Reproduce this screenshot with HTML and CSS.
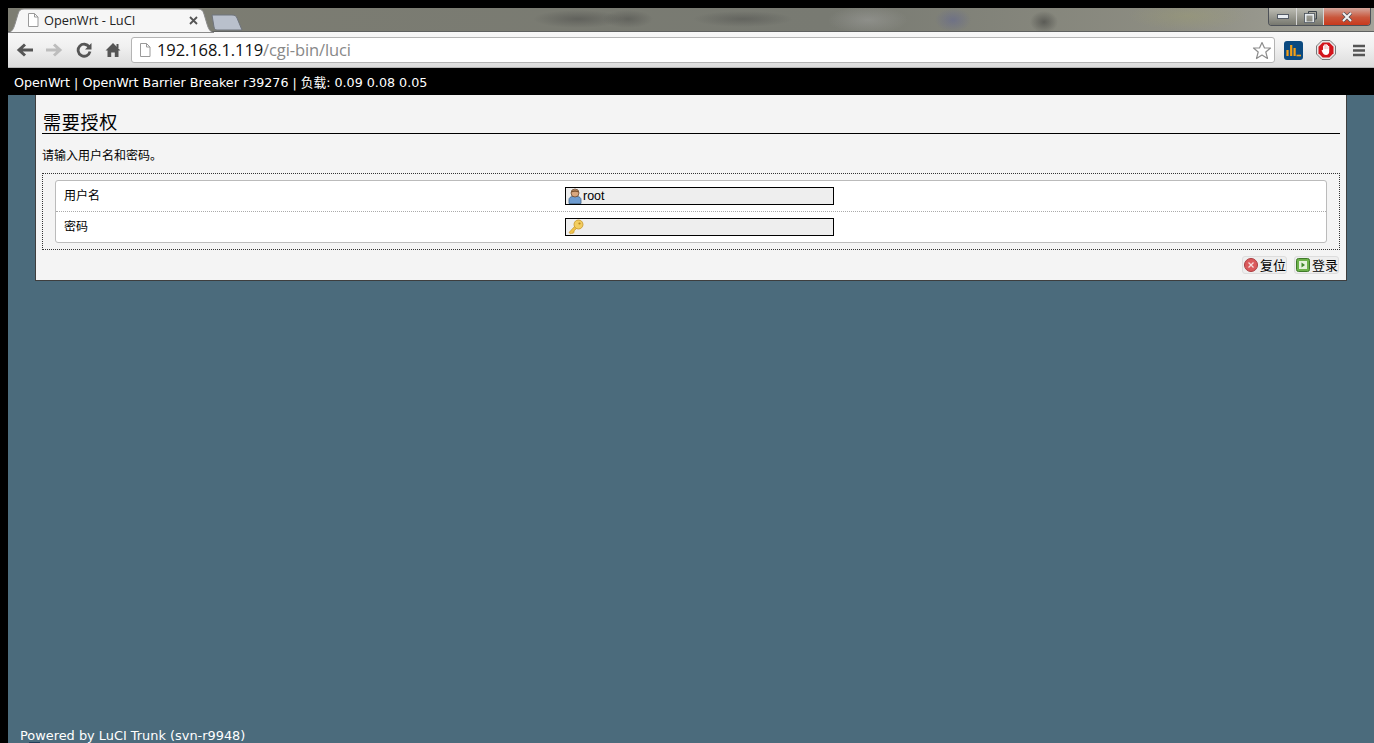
FILE: index.html
```html
<!DOCTYPE html>
<html lang="zh">
<head>
<meta charset="utf-8">
<title>OpenWrt - LuCI</title>
<link rel="stylesheet" href="styles.css">
</head>
<body>
<div class="browser">
  <div class="tabstrip">
    <div class="tab">
      <svg class="tab-shape" width="206" height="25" viewBox="0 0 206 25"><path d="M0 24.500C4 24 5.500 21 7 16L10 6C11 2.500 12.500 1 16 1H190C193.500 1 195 2.500 196 6L199 16C200.500 21 202 24 206 24.500Z" fill="#f6f6f6" stroke="#8b8b8b" stroke-width="1"/></svg>
      <svg class="page-ico" width="12" height="14" viewBox="0 0 12 14"><path d="M1.500.5H7.500L11 4V13.500H1.500Z" fill="#fff" stroke="#9a9a9a"/><path d="M7.500.5V4H11" fill="none" stroke="#9a9a9a"/></svg>
      <span class="tab-title">OpenWrt - LuCI</span>
      <svg class="tab-close" width="9" height="9" viewBox="0 0 9 9"><path d="M1 1L8 8M8 1L1 8" stroke="#555" stroke-width="1.800"/></svg>
    </div>
    <svg class="newtab" width="33" height="17" viewBox="0 0 33 17"><path d="M1 1H21C24 1 25 2 26 4L31 16H6C4 16 3.500 15 3 13Z" fill="#b9c0cc" stroke="#6f747c" stroke-width="1"/></svg>
    <div class="winctl">
      <div class="wbtn wmin"><svg width="12" height="5" viewBox="0 0 12 5"><rect x=".5" y=".5" width="11" height="4" fill="#e9eef2" stroke="#555c66"/></svg></div>
      <div class="wbtn wmax"><svg width="13" height="12" viewBox="0 0 13 12"><path d="M4.500 3V.5H12.500V8H9.500" fill="none" stroke="#3d444c" stroke-width="1"/><rect x="1.500" y="3.500" width="8" height="8" fill="none" stroke="#e6ebef" stroke-width="2"/><rect x=".5" y="2.500" width="10" height="9" fill="none" stroke="#4a525a" stroke-width=".8"/></svg></div>
      <div class="wbtn wclose"><svg width="12" height="10" viewBox="0 0 12 10"><path d="M2 1L10 9M10 1L2 9" stroke="#4c4f57" stroke-width="3.400"/><path d="M2 1L10 9M10 1L2 9" stroke="#f2f2f2" stroke-width="2"/></svg></div>
    </div>
  </div>
  <div class="toolbar">
    <svg class="nav nav-back" width="18" height="16" viewBox="0 0 18 16"><path d="M17 8H5M9 2.500L3 8L9 13.500" fill="none" stroke="#555" stroke-width="3"/></svg>
    <svg class="nav nav-fwd" width="18" height="16" viewBox="0 0 18 16"><path d="M1 8H13M9 2.500L15 8L9 13.500" fill="none" stroke="#bdbdbd" stroke-width="3"/></svg>
    <svg class="nav nav-reload" width="16" height="16" viewBox="0 0 16 16"><path d="M13.200 5A6 6 0 1 0 14 9.500" fill="none" stroke="#555" stroke-width="2.800"/><path d="M15.500 1V7.500H9Z" fill="#555"/></svg>
    <svg class="nav nav-home" width="16" height="16" viewBox="0 0 16 16"><path d="M8 1L15.500 8.500H13.500V15H9.800V10.500H6.200V15H2.500V8.500H.5Z" fill="#555"/><rect x="11.500" y="2" width="2" height="4" fill="#555"/></svg>
    <div class="omnibox">
      <svg width="12" height="14" viewBox="0 0 12 14"><path d="M1.500.5H7.500L11 4V13.500H1.500Z" fill="#fff" stroke="#9a9a9a"/><path d="M7.500.5V4H11" fill="none" stroke="#9a9a9a"/></svg>
      <span class="url"><span class="host">192.168.1.119</span>/cgi-bin/luci</span>
      <svg class="star" width="20" height="19" viewBox="0 0 20 19"><path d="M10 1.500L12.500 7H18.500L13.800 11L15.500 17.500L10 14L4.500 17.500L6.200 11L1.500 7H7.500Z" fill="#fff" stroke="#8d8d8d" stroke-width="1.200" stroke-linejoin="round"/></svg>
    </div>
    <svg class="ext ext-a" width="19" height="19" viewBox="0 0 19 19"><rect width="19" height="19" rx="3" fill="#0b4a80"/><path d="M3.500 9V15M7.200 4V15M10.600 7V15" stroke="#f5a016" stroke-width="2.200"/><path d="M12.500 14.500H17" stroke="#f5a016" stroke-width="1.600"/></svg>
    <svg class="ext ext-b" width="20" height="20" viewBox="0 0 20 20"><path d="M6 .5H14L19.500 6V14L14 19.500H6L.5 14V6Z" fill="#e9e9e9" stroke="#777"/><path d="M6.700 2.500H13.300L17.500 6.700V13.300L13.300 17.500H6.700L2.500 13.300V6.700Z" fill="#d3141b"/><path d="M5.500 10.500L7 9.800V6C7 5.300 8.200 5.300 8.200 6V4.800C8.200 4.100 9.500 4.100 9.500 4.800V4.500C9.500 3.800 10.800 3.800 10.800 4.500V5.200C10.800 4.500 12 4.500 12 5.200V6.500C12 5.900 13.200 5.900 13.200 6.500V11.500C13.200 13.800 12 15 10 15C8.500 15 7.500 14.200 6.800 13Z" fill="#fff"/><path d="M8.200 6V9M9.500 5V9M10.800 5.300V9M12 6.500V9" stroke="#e39a9a" stroke-width=".5"/></svg>
    <svg class="menu" width="14" height="13" viewBox="0 0 14 13"><path d="M1 2H13M1 6.500H13M1 11H13" stroke="#555" stroke-width="2.400"/></svg>
  </div>
  <div class="page">
    <header class="topbar">OpenWrt | OpenWrt Barrier Breaker r39276 | 负载: 0.09 0.08 0.05</header>
    <main class="panel">
      <h2 class="heading">需要授权</h2>
      <p class="descr">请输入用户名和密码。</p>
      <fieldset class="fields">
        <div class="fieldbox">
          <div class="row">
            <label class="lbl">用户名</label>
            <div class="inp">
              <svg width="14" height="16" viewBox="0 0 14 16"><path d="M1 15.500V11.500C1 9.800 2.500 9 4 8.500H10C11.500 9 13 9.800 13 11.500V15.500Z" fill="#6d9bd0" stroke="#3d6389" stroke-width=".8"/><circle cx="7" cy="5" r="4" fill="#d9a77f" stroke="#6a4a33" stroke-width=".8"/><path d="M3 4.500C3 1.500 11 1.500 11 4.500C8.500 3.500 5.500 3.500 3 4.500Z" fill="#7a5230"/></svg>
              <span class="val">root</span>
            </div>
          </div>
          <div class="row row-last">
            <label class="lbl">密码</label>
            <div class="inp">
              <svg width="16" height="16" viewBox="0 0 16 16"><path d="M7 7L1 13.500L2.800 15L4 13.800L5 14.500L6.200 13L5.800 12L9 9Z" fill="#f0c349" stroke="#c5942a" stroke-width=".7"/><circle cx="10.500" cy="5.500" r="4.500" fill="#f2cd60" stroke="#c5942a" stroke-width=".8"/><circle cx="11.500" cy="4.500" r="1.100" fill="#b8861f"/></svg>
            </div>
          </div>
        </div>
      </fieldset>
      <div class="actions">
        <button class="btn">
          <svg width="14" height="14" viewBox="0 0 14 14"><circle cx="7" cy="7" r="6.500" fill="#db5a5c" stroke="#a93c3f"/><path d="M4.500 4.500L9.500 9.500M9.500 4.500L4.500 9.500" stroke="#f6dcdc" stroke-width="1.300"/></svg>
          <span>复位</span>
        </button>
        <button class="btn">
          <svg width="14" height="14" viewBox="0 0 14 14"><rect x=".5" y=".5" width="13" height="13" rx="2" fill="#6db24a" stroke="#3f7a2a"/><rect x="3" y="3" width="8" height="8" fill="#e5f2dc"/><path d="M5.500 4.500L9 7L5.500 9.500Z" fill="#3f8a2a"/></svg>
          <span>登录</span>
        </button>
      </div>
    </main>
    <footer class="foot">Powered by LuCI Trunk (svn-r9948)</footer>
  </div>
</div>
</body>
</html>
```

FILE: styles.css
```css
* { box-sizing: border-box; }
html, body { margin: 0; height: 100%; overflow: hidden; }
body {
  background: #000;
  padding: 8px 0 0 8px;
  font-family: "Liberation Sans", "Noto Sans CJK SC", sans-serif;
}
.browser { height: 735px; display: flex; flex-direction: column; }

.tabstrip {
  height: 24px;
  flex: none;
  display: flex;
  align-items: flex-start;
  background:
    radial-gradient(ellipse 45px 9px at 570px 11px, rgba(60,60,60,.4), transparent),
    radial-gradient(ellipse 25px 9px at 620px 11px, rgba(55,55,55,.35), transparent),
    radial-gradient(ellipse 50px 8px at 735px 11px, rgba(60,60,60,.35), transparent),
    radial-gradient(ellipse 40px 14px at 860px 12px, rgba(170,170,170,.4), transparent),
    radial-gradient(ellipse 18px 12px at 945px 12px, rgba(90,95,150,.45), transparent),
    radial-gradient(ellipse 60px 14px at 1180px 8px, rgba(160,160,110,.35), transparent),
    radial-gradient(ellipse 14px 11px at 1036px 14px, rgba(40,40,40,.45), transparent),
    linear-gradient(90deg, #7d7d72, #787a72 60%, #8d8d82 85%, #a3a39a);
  border-bottom: 1px solid #5f6160;
}
.tab { position: relative; width: 206px; height: 25px; flex: none; margin-top: 0; }
.tab-shape { position: absolute; left: 0; top: 0; }
.page-ico { position: absolute; left: 19px; top: 5px; }
.tab-title {
  position: absolute; left: 36px; top: 4px;
  font: 12.800px/16px "Open Sans", "Liberation Sans", sans-serif;
  color: #222;
}
.tab-close { position: absolute; left: 181px; top: 8px; }
.newtab { flex: none; margin: 6px 0 0 -3px; }

.winctl {
  margin-left: auto;
  margin-right: 3px;
  display: flex;
  height: 18px;
  width: 103px;
  border: 1px solid #4d5158;
  border-top: 0;
  border-radius: 0 0 4px 4px;
  overflow: hidden;
}
.wbtn { display: flex; align-items: center; justify-content: center; height: 100%; border-right: 1px solid #d6d6d6; }
.wmin { width: 28px; background: linear-gradient(#bdbdb4, #77786f); }
.wmax { width: 27px; background: linear-gradient(#bdbdb4, #77786f); }
.wclose { flex: 1; border-right: 0; background: linear-gradient(#d5a79c 0, #c9573c 55%, #c9391d); }

.toolbar {
  height: 36px;
  flex: none;
  display: flex;
  align-items: center;
  padding: 1px 8px 0 8px;
  background: linear-gradient(#f8f8f8, #f1f1f1 40%, #dcdcdc);
  border-bottom: 1px solid #b5b5b5;
}
.nav { flex: none; }
.nav-back { margin-right: 11px; }
.nav-fwd { margin-right: 13px; }
.nav-reload { margin-right: 13px; }
.nav-home { margin-right: 10px; }
.omnibox {
  width: 1144px;
  height: 26px;
  flex: none;
  display: flex;
  align-items: center;
  gap: 6px;
  padding: 0 2px 0 7px;
  background: #fff;
  border: 1px solid #b4b4b4;
  border-radius: 3px;
}
.url { font: 16.500px/20px "Open Sans", "Liberation Sans", sans-serif; color: #888; letter-spacing: -.1px; }
.host { color: #111; }
.star { margin-left: auto; }
.ext { flex: none; }
.ext-a { margin-left: 9px; }
.ext-b { margin-left: 13px; }
.menu { flex: none; margin-left: 16px; }

.page {
  flex: 1;
  min-height: 0;
  display: flex;
  flex-direction: column;
  background: #4b6b7c;
}
.topbar {
  height: 27px;
  flex: none;
  padding: 7px 0 0 6px;
  background: #000;
  color: #fff;
  font: 12.700px/15px "DejaVu Sans", "Noto Sans CJK SC", sans-serif;
}
.panel {
  margin: 0 27px 0 27px;
  height: 186px;
  flex: none;
  padding: 0 6px 0 6px;
  background: #f4f4f4;
  border-left: 1px solid #3e3e3e;
  border-right: 1px solid #3e3e3e;
  border-bottom: 1px solid #3e3e3e;
}
.heading {
  margin: 16px 0 0 0;
  height: 23px;
  padding-left: 1px;
  font: 400 18px/20px "Noto Sans CJK SC", sans-serif;
  letter-spacing: .75px;
  color: #000;
  border-bottom: 1px solid #000;
}
.descr {
  margin: 13px 0 0 0;
  font: 12px/16px "Noto Sans CJK SC", sans-serif;
  color: #000;
}
.fields {
  margin: 10px 0 0 0;
  padding: 6px 12px 6px 12px;
  height: 77px;
  border: 1px dotted #333;
}
.fieldbox {
  height: 63px;
  background: #fff;
  border: 1px solid #bbb;
  border-radius: 3px;
}
.row {
  height: 31px;
  display: flex;
  align-items: center;
  padding-left: 8px;
  border-bottom: 1px dotted #aaa;
}
.row-last { height: 30px; border-bottom: 0; }
.lbl {
  width: 501px;
  flex: none;
  font: 12px/14px "Noto Sans CJK SC", sans-serif;
  color: #000;
  position: relative;
  top: -1px;
}
.inp {
  width: 269px;
  height: 18px;
  display: flex;
  align-items: center;
  gap: 1px;
  padding-left: 2px;
  background: #eee;
  border: 1px solid #000;
}
.val { font: 12.500px/14px "Liberation Sans", sans-serif; color: #000; }
.actions {
  display: flex;
  justify-content: flex-end;
  gap: 7px;
  margin-top: 6px;
  padding-right: 1px;
}
.btn {
  height: 18px;
  width: 45px;
  padding: 0 0 0 1px;
  display: flex;
  align-items: center;
  gap: 2px;
  background: #eee;
  border: 1px solid #ddd;
  border-radius: 3px;
  font: 13px/14px "Noto Sans CJK SC", sans-serif;
  color: #000;
}
.foot {
  position: relative;
  margin-top: auto;
  height: 16px;
  padding: 1px 0 0 12px;
  color: #fff;
  font: 12.900px/16px "DejaVu Sans", sans-serif;
}
.foot::after {
  content: "";
  position: absolute;
  left: 21px;
  top: 15px;
  width: 11px;
  height: 1px;
  background: #1f3d58;
}
```
